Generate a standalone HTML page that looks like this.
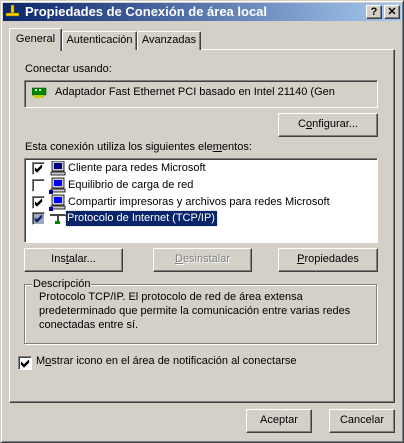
<!DOCTYPE html>
<html><head><meta charset="utf-8"><style>
*{margin:0;padding:0;box-sizing:border-box}
body{width:404px;height:443px;background:#d4d0c8;font:11px "Liberation Sans",sans-serif;color:#000;position:relative;overflow:hidden}
.a{position:absolute}
.win{left:0;top:0;width:404px;height:443px;border:1px solid;border-color:#d4d0c8 #404040 #404040 #d4d0c8;box-shadow:inset 1px 1px #fff,inset -1px -1px #808080}
.title{left:3px;top:3px;width:398px;height:18px;background:linear-gradient(90deg,#0a246a,#a6caf0);color:#fff;font-weight:bold;font-size:13px;line-height:18px;padding-left:22px}
.raised{border:1px solid;border-color:#fff #404040 #404040 #fff;box-shadow:inset -1px -1px #808080}
.sunk{border:1px solid;border-color:#808080 #fff #fff #808080;box-shadow:inset 1px 1px #404040}
.btn{text-align:center;line-height:21px}
.tb{width:16px;height:14px;top:5px;background:#d4d0c8;font-size:11px;font-weight:bold;line-height:12px;text-align:center;color:#000}
.tab{border:1px solid;border-bottom:none;border-color:#fff #404040 #404040 #fff;border-radius:2px 2px 0 0;box-shadow:inset -1px 0 #808080;background:#d4d0c8;text-align:center;line-height:17px}
.cb{width:13px;height:13px;background:#fff;border:1px solid;border-color:#808080 #fff #fff #808080;box-shadow:inset 1px 1px #404040;overflow:hidden}
.cb svg{position:absolute;left:1px;top:1px}
.grp{border:1px solid #808080;box-shadow:1px 1px #fff,inset 1px 1px #fff}
u{text-decoration:underline}
</style></head><body>
<div class="a win"></div>
<div class="a title">Propiedades de Conexión de área local</div>
<svg class="a" style="left:5px;top:5px" width="16" height="14"><rect x="6" y="0" width="3" height="8" fill="#fc0" stroke="#660" stroke-width=".5"/><rect x="1" y="8" width="13" height="3" fill="#fc0" stroke="#660" stroke-width=".5"/></svg>
<div class="a tb raised" style="left:366px">?</div>
<div class="a tb raised" style="left:384px">✕</div>

<div class="a raised" style="left:9px;top:49px;width:386px;height:354px;border-top-color:#fff"></div>
<div class="a tab" style="left:62px;top:31px;width:75px;height:19px">Autenticación</div>
<div class="a tab" style="left:137px;top:31px;width:64px;height:19px">Avanzadas</div>
<div class="a tab" style="left:9px;top:28px;width:53px;height:23px;line-height:20px;z-index:2">General</div>

<div class="a" style="left:25px;top:63px">Conectar usando:</div>
<div class="a sunk" style="left:24px;top:80px;width:354px;height:28px"></div>
<svg class="a" style="left:32px;top:87px" width="16" height="12"><rect x="0" y="1" width="14" height="7" fill="#080" stroke="#040" stroke-width=".5"/><rect x="2" y="8" width="10" height="3" fill="#cc0"/><rect x="3" y="2" width="2" height="2" fill="#cfc"/><rect x="7" y="2" width="2" height="2" fill="#cfc"/></svg>
<div class="a" style="left:55px;top:86px">Adaptador Fast Ethernet PCI basado en Intel 21140 (Gen</div>
<div class="a raised btn" style="left:278px;top:113px;width:100px;height:24px">C<u>o</u>nfigurar...</div>

<div class="a" style="left:25px;top:141px">Esta conexión utiliza los siguientes ele<u>m</u>entos:</div>
<div class="a sunk" style="left:24px;top:158px;width:354px;height:85px;background:#fff"></div>
<div class="a cb" style="left:32px;top:162px"><svg width="9" height="9"><path d="M1 4l2 2 5-5M1 5l2 2 5-5M1 6l2 2 5-5" stroke="#000" fill="none"/></svg></div>
<div class="a cb" style="left:32px;top:179px"></div>
<div class="a cb" style="left:32px;top:196px"><svg width="9" height="9"><path d="M1 4l2 2 5-5M1 5l2 2 5-5M1 6l2 2 5-5" stroke="#000" fill="none"/></svg></div>
<div class="a cb" style="left:32px;top:212px;background:#a0a8c0"><svg width="9" height="9"><path d="M1 4l2 2 5-5M1 5l2 2 5-5M1 6l2 2 5-5" stroke="#0a246a" fill="none"/></svg></div>
<svg class="a" style="left:49px;top:161px" width="18" height="70">
<g><rect x="3" y="0" width="12" height="10" fill="#ccc" stroke="#000" stroke-width=".8"/><rect x="5" y="2" width="8" height="6" fill="#008"/><rect x="2" y="11" width="14" height="3" fill="#ccc" stroke="#000" stroke-width=".8"/></g>
<g transform="translate(0,17)"><rect x="3" y="0" width="12" height="10" fill="#ccc" stroke="#000" stroke-width=".8"/><rect x="5" y="2" width="8" height="6" fill="#00f"/><rect x="2" y="11" width="14" height="3" fill="#ccc" stroke="#000" stroke-width=".8"/><rect x="0" y="12" width="4" height="4" fill="#008"/></g>
<g transform="translate(0,34)"><rect x="3" y="0" width="12" height="10" fill="#ccc" stroke="#000" stroke-width=".8"/><rect x="5" y="2" width="8" height="6" fill="#00f"/><rect x="2" y="11" width="14" height="3" fill="#ccc" stroke="#000" stroke-width=".8"/><rect x="0" y="12" width="4" height="4" fill="#008"/></g>
<g transform="translate(0,51)"><rect x="1" y="2" width="16" height="2" fill="#444"/><rect x="8" y="2" width="2" height="9" fill="#444"/><rect x="6" y="9" width="5" height="3" fill="#080"/></g>
</svg>
<div class="a" style="left:68px;top:162px">Cliente para redes Microsoft</div>
<div class="a" style="left:68px;top:179px">Equilibrio de carga de red</div>
<div class="a" style="left:68px;top:196px">Compartir impresoras y archivos para redes Microsoft</div>
<div class="a" style="left:66px;top:211px;width:151px;height:15px;background:#0a246a;color:#fff;padding-left:1px;line-height:14px;outline:1px dotted #ccc">Protocolo de Internet (TCP/IP)</div>

<div class="a raised btn" style="left:24px;top:248px;width:99px;height:24px">Ins<u>t</u>alar...</div>
<div class="a raised btn" style="left:153px;top:248px;width:99px;height:24px;color:#808080;text-shadow:1px 1px #fff"><u>D</u>esinstalar</div>
<div class="a raised btn" style="left:278px;top:248px;width:100px;height:24px"><u>P</u>ropiedades</div>

<div class="a grp" style="left:24px;top:284px;width:353px;height:60px"></div>
<div class="a" style="left:32px;top:278px;background:#d4d0c8;padding:0 1px">Descripción</div>
<div class="a" style="left:39px;top:290px;line-height:14px">Protocolo TCP/IP. El protocolo de red de área extensa<br>predeterminado que permite la comunicación entre varias redes<br>conectadas entre sí.</div>

<div class="a cb" style="left:18px;top:356px;width:14px;height:14px"><svg width="10" height="10"><path d="M1 4l3 3 5-5M1 5l3 3 5-5M1 6l3 3 5-5" stroke="#000" fill="none"/></svg></div>
<div class="a" style="left:36px;top:355px">M<u>o</u>strar icono en el área de notificación al conectarse</div>

<div class="a raised btn" style="left:246px;top:409px;width:66px;height:24px">Aceptar</div>
<div class="a raised btn" style="left:329px;top:409px;width:66px;height:24px">Cancelar</div>
</body></html>
